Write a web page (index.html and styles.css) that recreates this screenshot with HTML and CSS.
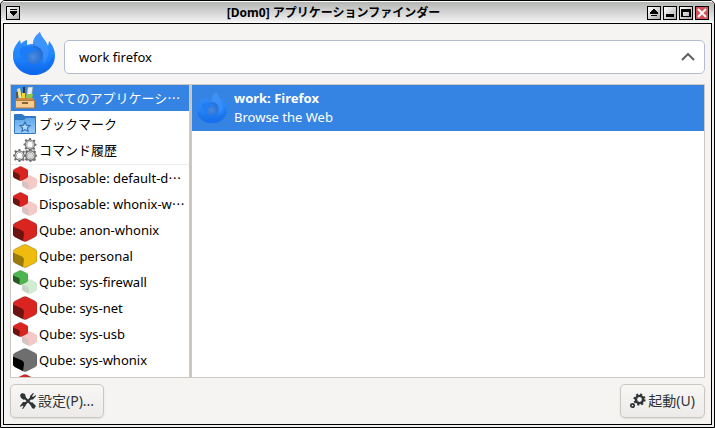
FILE: index.html
```
<!DOCTYPE html>
<html lang="ja">
<head>
  <meta charset="UTF-8">
  <meta name="viewport" content="width=device-width, initial-scale=1.0">
  <title>[Dom0] アプリケーションファインダー</title>
  <link rel="stylesheet" href="styles.css">
</head>
<body>
  <svg class="defs" aria-hidden="true">
    <defs>
      <linearGradient id="flame" x1="0" y1="0" x2="0" y2="1">
        <stop offset="0" stop-color="#3d94fc"/>
        <stop offset="0.6" stop-color="#1f83fb"/>
        <stop offset="1" stop-color="#0a62e6"/>
      </linearGradient>
      <radialGradient id="globe" cx="0.45" cy="0.6" r="0.6">
        <stop offset="0" stop-color="#4a8ce0"/>
        <stop offset="1" stop-color="#2168d2"/>
      </radialGradient>
      <linearGradient id="folder" x1="0" y1="0" x2="0" y2="1">
        <stop offset="0" stop-color="#62a8ea"/>
        <stop offset="1" stop-color="#9ccbf7"/>
      </linearGradient>
    </defs>
    <symbol id="firefox" viewBox="0 0 44 44">
      <path fill="url(#flame)" d="M1 23C1 17 4 12 8 8L9 12C10 10 12 9 15 8L15 13C17 12 19 12 21 12C21 7 24 3 28 0C29 5 34 8 36 14L37 9C41 14 43 18 43 24C43 35 33 43 22 43S1 35 1 23Z"/>
      <path fill="#0f6cf0" d="M1 25C5 33 12 38 21 38C32 38 39 31 41 22C43 32 37 40 27 42C14 45 2 38 1 25Z" opacity="0.6"/>
      <path fill="#4a9cff" d="M28 0C29 5 34 8 36 14C38 22 35 28 31 32C33 21 28 14 21 12C21 7 24 3 28 0Z" opacity="0.5"/>
      <circle cx="22" cy="23" r="9" fill="url(#globe)"/>
      <path fill="#1c7bf6" d="M8 17C11 13 19 14 26 17C24 19 21 19 18 21C15 22 14 25 15 29C10 27 7 22 8 17Z"/>
    </symbol>
    <symbol id="cube" viewBox="0 0 24 24">
      <path fill="currentColor" stroke="#000" stroke-opacity="0.35" stroke-width="0.6" stroke-linejoin="round" d="M10 1Q12 0 14 1L22 5Q24 6 24 8V16Q24 18 22 19L14 23Q12 24 10 23L2 19Q0 18 0 16V8Q0 6 2 5Z"/>
      <path fill="#000" fill-opacity="var(--shade, 0.5)" d="M0 9L1 9L8 12Q11 13 11 16L10 23L2 19Q0 18 0 16Z"/>
    </symbol>
    <symbol id="cube-disp" viewBox="0 0 24 24">
      <use href="#cube" x="9" y="9" width="15" height="15" opacity="0.25"/>
      <use href="#cube" x="0" y="0" width="15" height="15"/>
    </symbol>
    <symbol id="toolbox" viewBox="0 0 24 24">
      <path fill="#f3e58a" d="M4 3l3-1 2 11H6z"/>
      <path fill="#555" d="M3 6h2v7H3z"/>
      <path fill="#f3d72b" d="M9 7h3v6H9z"/>
      <path fill="#333" d="M10 1h2v6h-2z"/>
      <path fill="#e9edf0" stroke="#8a9299" stroke-width="0.6" d="M15 1h5l-2 12h-5z"/>
      <path fill="#8ecb43" d="M14 8h6l-1 5h-6z"/>
      <path fill="#c98b45" d="M4 12h16l2 3H2z"/>
      <path fill="#f6cc93" stroke="#b37a39" d="M2.500 14.500h19v7.500h-19z"/>
      <path fill="#8f6230" d="M9 16h6v2H9z"/>
    </symbol>
    <symbol id="bookmark" viewBox="0 0 24 24">
      <path fill="#2f78c4" d="M1 3Q1 2 2 2H9L12 4H22Q23 4 23 5V21Q23 22 22 22H2Q1 22 1 21Z"/>
      <path fill="url(#folder)" d="M2 8H11L13 6H22V21H2Z"/>
      <path fill="#b4d8f8" stroke="#2f72b8" stroke-width="1.200" d="M12 10l1.500 3.200 3.500.400-2.600 2.300.7 3.500-3.100-1.800-3.100 1.800.7-3.500L7 13.600l3.500-.4z"/>
    </symbol>
    <symbol id="cog" viewBox="0 0 16 16">
      <path fill="currentColor" d="M7 0h2l.6 2.300 1.700.7 2-1.200 1.500 1.500-1.200 2 .7 1.700L16 7.200v2l-2 .6-.7 1.600 1.200 2-1.500 1.500-2-1.200-1.600.7L9 16H7l-.6-2-1.700-.7-2 1.200-1.500-1.500 1.200-2L2 9.400 0 9V7l2-.6.700-1.600-1.200-2L3 1.300l2 1.200 1.400-.5zM8 4.500a3.500 3.500 0 100 7 3.500 3.500 0 000-7z"/>
    </symbol>
    <symbol id="gears" viewBox="0 0 24 24">
      <path fill="#d8d8d8" stroke="#888" d="M13 13h9v9h-9z"/>
      <g color="#707070">
        <use href="#cog" x="10" y="0" width="14" height="13"/>
        <use href="#cog" x="0" y="11" width="13" height="13"/>
        <use href="#cog" x="11" y="11" width="13" height="13"/>
      </g>
      <g fill="none" stroke="#ddd">
        <circle cx="17" cy="6.500" r="3.700"/>
        <circle cx="6.500" cy="17.500" r="3.700"/>
        <circle cx="17.500" cy="17.500" r="3.700"/>
      </g>
    </symbol>
  </svg>

  <div class="window">
    <header class="titlebar">
      <button class="tb-btn" aria-label="メニュー">
        <svg viewBox="0 0 14 14"><path d="M4 3h7v1H4zM4 5h7v2H10v1H9v1H8v1H7V9H6V8H5V7H4z"/></svg>
      </button>
      <h1 class="title">[Dom0] アプリケーションファインダー</h1>
      <div class="tb-group">
        <button class="tb-btn" aria-label="シェード">
          <svg viewBox="0 0 14 14"><path d="M6 3h2v1h1v1h1v1h1v2H3V6h1V5h1V4h1zM4 9h6v1H4z"/></svg>
        </button>
        <button class="tb-btn" aria-label="最小化">
          <svg viewBox="0 0 14 14"><path d="M3 8h8v3H3z"/></svg>
        </button>
        <button class="tb-btn" aria-label="最大化">
          <svg viewBox="0 0 14 14"><path fill-rule="evenodd" d="M2 3h10v8H2zM4 6v4h6V6z"/></svg>
        </button>
        <button class="tb-btn tb-close" aria-label="閉じる">
          <svg viewBox="0 0 14 14"><path d="M3 3l8 8M11 3l-8 8"/></svg>
        </button>
      </div>
    </header>

    <main class="content">
      <div class="search-row">
        <svg class="app-icon"><use href="#firefox"/></svg>
        <div class="entry">
          <input class="entry-input" type="text" aria-label="検索" value="work firefox">
          <button class="entry-toggle" aria-label="折りたたむ">
            <svg viewBox="0 0 14 8"><path d="M1 7l6-6 6 6"/></svg>
          </button>
        </div>
      </div>

      <div class="panes">
        <ul class="categories">
          <li class="category selected"><svg class="icon"><use href="#toolbox"/></svg>すべてのアプリケーシ<span class="dots">…</span></li>
          <li class="category"><svg class="icon"><use href="#bookmark"/></svg>ブックマーク</li>
          <li class="category"><svg class="icon"><use href="#gears"/></svg>コマンド履歴</li>
          <li class="separator" role="separator"></li>
          <li class="category"><svg class="icon red"><use href="#cube-disp"/></svg>Disposable: default-d<span class="dots">…</span></li>
          <li class="category"><svg class="icon red"><use href="#cube-disp"/></svg>Disposable: whonix-w<span class="dots">…</span></li>
          <li class="category"><svg class="icon red"><use href="#cube"/></svg>Qube: anon-whonix</li>
          <li class="category"><svg class="icon yellow"><use href="#cube"/></svg>Qube: personal</li>
          <li class="category"><svg class="icon green"><use href="#cube-disp"/></svg>Qube: sys-firewall</li>
          <li class="category"><svg class="icon red"><use href="#cube"/></svg>Qube: sys-net</li>
          <li class="category"><svg class="icon red"><use href="#cube-disp"/></svg>Qube: sys-usb</li>
          <li class="category"><svg class="icon gray"><use href="#cube"/></svg>Qube: sys-whonix</li>
          <li class="category"><svg class="icon red"><use href="#cube"/></svg></li>
        </ul>
        <div class="results">
          <div class="result">
            <svg class="result-icon"><use href="#firefox"/></svg>
            <div>
              <div class="result-name">work: Firefox</div>
              <div>Browse the Web</div>
            </div>
          </div>
        </div>
      </div>

      <footer class="actions">
        <button class="btn">
          <svg class="btn-icon" viewBox="0 0 16 16">
            <path fill="none" stroke="currentColor" stroke-width="2.200" d="M4 4l9 9M12 4l-9 9"/>
            <path fill="currentColor" d="M0 2l2-2 3 1 1 4-2 2-3-2zM10 11l2-2 4 4-2 3-2-1zM10 3l3-3 1 .5-2 2.500 1 1 2.500-2 .5 1-3 3.500h-3zM0 13l3-4h3v3l-3 4-1-.5 2-2.500-1-1-2.500 2z"/>
          </svg>設定(P)...
        </button>
        <button class="btn">
          <svg class="btn-icon" viewBox="0 0 16 16">
            <circle cx="9.500" cy="6.500" r="3.600" fill="none" stroke="currentColor" stroke-width="2.400"/>
            <circle cx="9.500" cy="6.500" r="5.300" fill="none" stroke="currentColor" stroke-width="1.600" stroke-dasharray="2.100 2.062"/>
            <circle cx="2.500" cy="12.500" r="1.700" fill="none" stroke="currentColor" stroke-width="1.700"/>
          </svg>起動(U)
        </button>
      </footer>
    </main>
  </div>
</body>
</html>
```

FILE: styles.css
```
* {
  box-sizing: border-box;
}
body {
  margin: 0;
  background: #fff;
  color: #000;
  font: 13px/18px "Noto Sans", "Noto Sans CJK JP", sans-serif;
}
button, input {
  font: inherit;
  color: inherit;
}
.defs {
  position: absolute;
  width: 0;
  height: 0;
}
.window {
  display: flex;
  flex-direction: column;
  height: 100vh;
  border: 1px solid #000;
  border-radius: 5px 5px 0 0;
  padding: 0 2px 2px;
  background: #eee;
  overflow: hidden;
}

/* title bar */
.titlebar {
  display: flex;
  align-items: center;
  height: 22px;
  flex: none;
  margin: 0 -2px;
  padding: 0 5px;
  border-top: 1px solid #fff;
  background: linear-gradient(#b4b6b4, #eeeeee 90%, #fff);
}
.title {
  flex: 1;
  margin: 0;
  text-align: center;
  font-size: 12px;
  line-height: 20px;
}
.tb-group {
  display: flex;
  gap: 2px;
}
.tb-btn {
  width: 14px;
  height: 14px;
  padding: 0;
  border: 1px solid #000;
  background: linear-gradient(135deg, #fff, #aaa);
}
.tb-btn svg {
  display: block;
  width: 14px;
  height: 14px;
  margin: -1px;
  shape-rendering: crispEdges;
}
.tb-close {
  background: #d4505a;
}
.tb-close path {
  stroke: #fff;
  stroke-width: 2;
  shape-rendering: auto;
}

/* window body */
.content {
  flex: 1;
  min-height: 0;
  display: flex;
  flex-direction: column;
  padding: 6px;
  border: 1px solid #000;
  background: #f5f4f2;
}
.search-row {
  display: flex;
  align-items: center;
  gap: 8px;
  height: 54px;
  flex: none;
  padding-left: 2px;
}
.app-icon {
  width: 44px;
  height: 44px;
  margin-bottom: 6px;
}
.entry {
  flex: 1;
  display: flex;
  align-items: center;
  height: 34px;
  padding: 0 9px 0 14px;
  border: 1px solid #b3bccf;
  border-radius: 5px;
  background: #fff;
}
.entry-input {
  flex: 1;
  min-width: 0;
  padding: 0;
  border: 0;
  outline: 0;
  background: none;
}
.entry-toggle {
  padding: 0;
  border: 0;
  background: none;
}
.entry-toggle svg {
  display: block;
  width: 14px;
  height: 8px;
  fill: none;
  stroke: #5c6164;
  stroke-width: 2;
}

/* panes */
.panes {
  flex: 1;
  min-height: 0;
  display: flex;
  border: 1px solid #cdc7c2;
  background: #fff;
}
.categories {
  width: 178px;
  flex: none;
  margin: 0;
  padding: 0;
  list-style: none;
  overflow: hidden;
}
.category {
  display: flex;
  align-items: center;
  height: 26px;
  padding-left: 2px;
  white-space: nowrap;
}
.icon {
  width: 24px;
  height: 24px;
  margin-right: 2px;
  flex: none;
}
.dots {
  font-family: "Noto Sans CJK JP", sans-serif;
}
.separator {
  height: 1px;
  margin: 1px 0 0;
  background: #eee;
}
.selected, .result {
  background: #3584e4;
  color: #fff;
}
.red { color: #d9241f; }
.yellow { color: #edbc0f; --shade: 0.35; }
.green { color: #4eb54e; }
.gray { color: #6e6e6e; --shade: 1; }
.results {
  flex: 1;
  border-left: 3px solid #cdc7c2;
}
.result {
  display: flex;
  align-items: center;
  gap: 6px;
  height: 46px;
  padding-left: 4px;
  line-height: 19px;
}
.result-icon {
  width: 32px;
  height: 32px;
  opacity: 0.75;
}
.result-name {
  font-weight: bold;
}

/* bottom buttons */
.actions {
  display: flex;
  justify-content: space-between;
  flex: none;
  padding-top: 6px;
}
.btn {
  display: flex;
  align-items: center;
  gap: 2px;
  height: 34px;
  padding: 0 9px;
  border: 1px solid #cdc7c2;
  border-radius: 5px;
  background: linear-gradient(#f8f7f6, #edebe9);
  box-shadow: 0 1px 2px rgba(0, 0, 0, 0.1);
  color: #2e3436;
  font-size: 14px;
}
.btn-icon {
  width: 16px;
  height: 16px;
}
```
